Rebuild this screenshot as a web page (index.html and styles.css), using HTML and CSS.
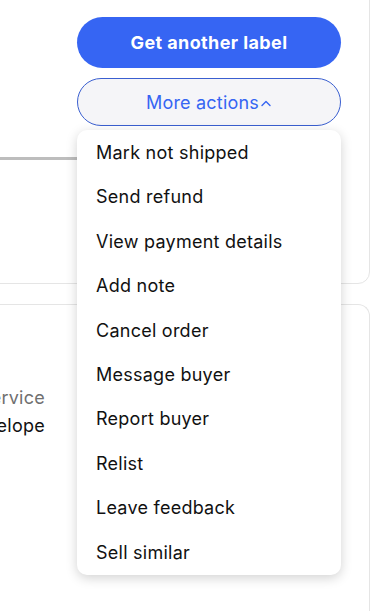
FILE: index.html
```html
<!DOCTYPE html>
<html>
<head>
<meta charset="utf-8">
<link rel="stylesheet" href="styles.css">
</head>
<body>
<div class="page">
  <section class="card card-top">
    <div class="card-main">
      <div class="progress"><div class="progress-fill"></div></div>
    </div>
    <div class="actions">
      <button class="btn btn-primary">Get another label</button>
      <div class="more">
        <button class="btn btn-secondary">More actions<svg class="caret" width="12" height="8" viewBox="0 0 12 8"><path d="M2 6.5 L6 2.5 L10 6.5" fill="none" stroke="currentColor" stroke-width="1.4" stroke-linecap="round" stroke-linejoin="round"/></svg></button>
        <ul class="menu">
          <li>Mark not shipped</li>
          <li>Send refund</li>
          <li>View payment details</li>
          <li>Add note</li>
          <li>Cancel order</li>
          <li>Message buyer</li>
          <li>Report buyer</li>
          <li>Relist</li>
          <li>Leave feedback</li>
          <li>Sell similar</li>
        </ul>
      </div>
    </div>
  </section>
  <section class="card card-bottom">
    <div class="ship-info">
      <div class="ship-label">Postal Service</div>
      <div class="ship-value">Large Envelope</div>
    </div>
  </section>
</div>
</body>
</html>
```
FILE: styles.css
```css
html, body {
  margin: 0;
  padding: 0;
  background: #fff;
  overflow: hidden;
}
body {
  width: 387px;
  height: 611px;
  font-family: Inter, "Noto Sans", sans-serif;
  color: #111;
}
.page {
  display: flex;
  flex-direction: column;
  gap: 20px;
  margin-left: -30px;
  margin-top: -30px;
  width: 400px;
}
.card {
  border: 1px solid #e5e5e5;
  background: #fff;
}
.card-top {
  display: flex;
  height: 314px;
  box-sizing: border-box;
  border-radius: 0 0 12px 0;
}
.card-main {
  flex: 1;
  padding-top: 186px;
}
.progress {
  height: 3px;
  background: #e5e5e5;
}
.progress-fill {
  height: 3px;
  width: 100%;
  background: #bdbdbd;
}
.actions {
  width: 264px;
  padding: 46px 28px 0 0;
  display: flex;
  flex-direction: column;
  gap: 10px;
}
.btn {
  font-family: inherit;
  width: 264px;
  border-radius: 26px;
  font-size: 18px;
  letter-spacing: 0.2px;
  cursor: pointer;
}
.btn-primary {
  height: 51px;
  background: #3665f3;
  color: #fff;
  border: none;
  font-weight: 700;
  letter-spacing: 0.4px;
}
.more {
  position: relative;
}
.btn-secondary {
  height: 48px;
  background: #f5f5f8;
  color: #3665f3;
  border: 1px solid #3a5fd0;
  display: flex;
  align-items: center;
  justify-content: center;
  gap: 1px;
}
.caret {
  margin-top: 1px;
}
.menu {
  position: absolute;
  left: 0;
  top: 52px;
  width: 264px;
  box-sizing: border-box;
  margin: 0;
  padding: 1px 0 0 19px;
  list-style: none;
  background: #fff;
  border-radius: 10px;
  box-shadow: 0 3px 12px rgba(0, 0, 0, 0.18);
  z-index: 2;
}
.menu li {
  height: 44.4px;
  line-height: 44px;
  font-size: 18px;
  letter-spacing: 0.25px;
}
.card-bottom {
  height: 307px;
  border-bottom: none;
  border-radius: 0 12px 0 0;
  padding-top: 82px;
  box-sizing: border-box;
}
.ship-info {
  width: 74px;
  display: flex;
  flex-direction: column;
  align-items: flex-end;
  gap: 7px;
  font-size: 18px;
  letter-spacing: 0.25px;
  white-space: nowrap;
}
.ship-label {
  color: #707070;
}
.ship-value {
  color: #111;
}
```
